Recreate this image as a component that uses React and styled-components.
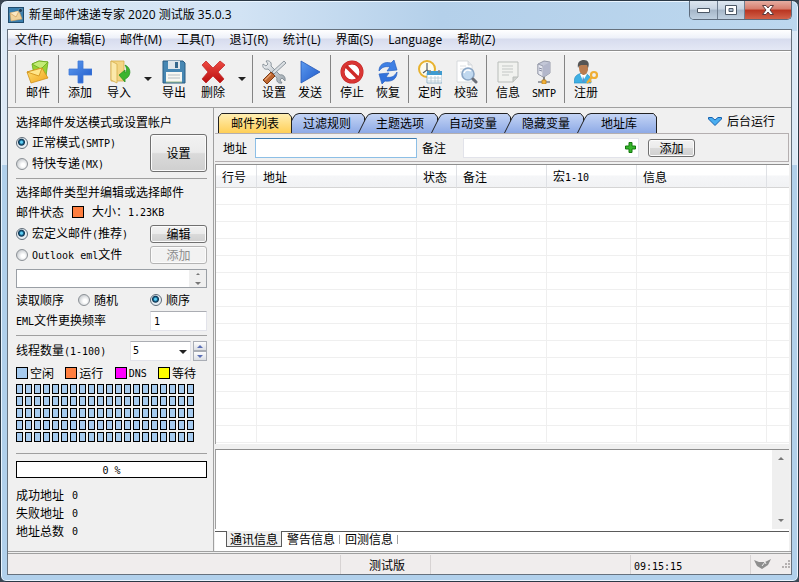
import React, { useState } from "react";
import styled, { createGlobalStyle, css } from "styled-components";

const GlobalStyle = createGlobalStyle`
  * {
    box-sizing: border-box;
  }
  body {
    margin: 0;
    background: #3b4652;
    color: #000;
    font: 12px/16px "Noto Sans CJK SC", sans-serif;
  }
  button, input, select, textarea {
    margin: 0;
    padding: 0;
    border-radius: 0;
    font: inherit;
    color: inherit;
  }
`;

const Window = styled.div`
  display: flex;
  flex-direction: column;
  min-height: 100vh;
  padding: 0 6px 6px;
  border: 1px solid #2b3845;
  border-radius: 7px 7px 6px 6px;
  box-shadow: inset 0 0 0 1px #eaf5ff;
  background: linear-gradient(#dce9f6, #dce9f6) 0 30px / 7px 134px no-repeat,
    linear-gradient(#dce9f6, #dce9f6) 100% 30px / 7px 134px no-repeat,
    linear-gradient(90deg, #d9e8f5 0, #d2e3f4 30%, #b4d0ea 55%, #bcd7ee 100%) 0 0 / 100% 30px no-repeat,
    #b1d0eb;
`;
const TitleBar = styled.header`
  display: flex;
  align-items: flex-start;
  height: 28px;
`;
const AppTitle = styled.h1`
  display: flex;
  flex: 1;
  align-items: center;
  gap: 5px;
  height: 28px;
  margin: 0;
  padding-left: 1px;
  font: 400 12px/16px "Open Sans", "Noto Sans CJK SC", sans-serif;
`;
const WindowButtons = styled.div`
  display: flex;
  border: 1px solid #5d6b7c;
  border-top: 0;
  border-radius: 0 0 5px 5px;
  overflow: hidden;
`;
const WindowButton = styled.button`
  display: flex;
  align-items: center;
  justify-content: center;
  width: ${({ $close }) => ($close ? "47px" : "27px")};
  height: 18px;
  border: 0;
  border-left: ${({ $first }) => ($first ? "0" : "1px solid #6f7f91")};
  background: ${({ $close }) =>
    $close
      ? "linear-gradient(#e5ada2 0, #d67c6c 45%, #b93420 50%, #d2624a 100%)"
      : "linear-gradient(#dde6ef 0, #c6d3e1 45%, #a5b6c8 50%, #bfd0e0 100%)"};
`;
const Client = styled.div`
  display: flex;
  flex: 1;
  flex-direction: column;
  border: 1px solid #66717d;
  background: #f0f0f0;
`;
const MenuBar = styled.nav`
  display: flex;
  align-items: center;
  height: 20px;
  padding-left: 7px;
  gap: 15px;
  background: linear-gradient(#fff 0, #eef1f9 40%, #d7dcee 45%, #e4e8f5 100%);
  font-family: "Open Sans", "Noto Sans CJK SC", sans-serif;
  a {
    color: #000;
    text-decoration: none;
    white-space: nowrap;
  }
`;
const ToolBar = styled.div`
  display: flex;
  height: 58px;
  padding: 4px 0 0 7px;
  border-top: 1px solid #8e8e8e;
  border-bottom: 1px solid #a0a0a0;
  box-shadow: inset 0 1px #fff;
`;
const Grip = styled.div`
  width: 5px;
  height: 48px;
  border-left: 1px solid #a0a0a0;
`;
const Separator = styled.div`
  width: 6px;
  height: 48px;
  padding-left: 2px;
  &::before {
    content: "";
    display: block;
    width: 1px;
    height: 48px;
    background: #848484;
  }
`;
const ToolButton = styled.button`
  display: flex;
  flex-direction: column;
  align-items: center;
  width: 36px;
  height: 48px;
  padding-top: 5px;
  border: 0;
  background: none;
  line-height: 16px;
  svg {
    flex: none;
  }
`;
const Split = styled.div`
  display: flex;
  padding-left: 3px;
`;
const Caret = styled.button`
  display: flex;
  align-items: center;
  justify-content: flex-end;
  width: 19px;
  height: 48px;
  padding-right: 4px;
  border: 0;
  background: none;
`;
const Mono = styled.span`
  font-family: "DejaVu Sans Mono", monospace;
  font-size: 10px;
`;

const Main = styled.div`
  display: flex;
  flex: 1;
  border-bottom: 1px solid #a0a0a0;
`;
const SidePanel = styled.aside`
  flex: none;
  width: 206px;
  padding: 4px 6px 0 8px;
  border-right: 1px solid #a0a0a0;
`;
const Section = styled.section`
  padding-bottom: ${({ $pad }) => $pad || "4px"};
  margin-bottom: ${({ $gap }) => $gap || "4px"};
  border-bottom: ${({ $last }) => ($last ? "0" : "1px solid #a0a0a0")};
`;
const Line = styled.div`
  display: flex;
  align-items: center;
  justify-content: ${({ $between }) => ($between ? "space-between" : "flex-start")};
  gap: ${({ $gap }) => $gap || "8px"};
  height: ${({ $h }) => $h || "18px"};
  white-space: nowrap;
`;
const Pair = styled.div`
  display: grid;
  grid-template-columns: 1fr 57px;
  align-items: center;
`;
const Option = styled.label`
  display: flex;
  align-items: center;
  gap: 4px;
  height: 21px;
  white-space: nowrap;
`;
const Radio = styled.input.attrs({ type: "radio" })`
  appearance: none;
  flex: none;
  width: 12px;
  height: 12px;
  border: 1px solid #8c9196;
  border-radius: 50%;
  background: radial-gradient(circle at 60% 60%, #fff 20%, #c4c8cc 80%);
  &:checked {
    border-color: #5f6c78;
    background: radial-gradient(circle at 45% 42%, #5fd0f5 0 1px, #17658f 2px, #0d3450 3px, #e6edf3 4px);
  }
`;
const PushButton = styled.button`
  width: ${({ $w }) => $w || "100%"};
  height: ${({ $h }) => $h || "18px"};
  border: 1px solid #707070;
  border-radius: 3px;
  box-shadow: inset 0 0 0 1px #fbfbfb;
  background: linear-gradient(#f2f2f2 0, #ebebeb 48%, #dadada 52%, #cfcfcf 100%);
  line-height: 14px;
  &:disabled {
    border-color: #b4b4b4;
    background: #f2f2f2;
    color: #8c8c8c;
  }
`;
const Swatch = styled.span`
  flex: none;
  width: 12px;
  height: 12px;
  border: 1px solid #000;
  background: ${({ $color }) => $color};
`;
const FileList = styled.div`
  display: flex;
  height: 19px;
  margin: 4px 0 1px;
  border: 1px solid #9a9fa5;
  background: #fff;
  textarea {
    flex: 1;
    min-width: 0;
    height: 17px;
    border: 0;
    outline: 0;
    resize: none;
    background: none;
    overflow: hidden;
  }
`;
const ScrollBar = styled.div`
  display: flex;
  flex: none;
  flex-direction: column;
  justify-content: space-between;
  width: 17px;
  background: #efefef;
  button {
    display: flex;
    align-items: center;
    justify-content: center;
    height: ${({ $small }) => ($small ? "8px" : "17px")};
    border: 0;
    background: none;
  }
`;
const TextInput = styled.input`
  width: ${({ $w }) => $w || "100%"};
  height: 20px;
  padding: 0 3px;
  border: 1px solid #e2e3ea;
  border-top-color: #abadb3;
  outline: 0;
  background: #fff;
  font: 10px/16px "DejaVu Sans Mono", "Noto Sans CJK SC", monospace;
  ${({ $focused }) =>
    $focused &&
    css`
      border-color: #8dbfe6;
      border-top-color: #3d7bad;
    `}
`;
const ThreadBox = styled.div`
  display: flex;
  gap: 2px;
`;
const SelectBox = styled.div`
  position: relative;
  select {
    appearance: none;
    width: 61px;
    height: 20px;
    padding-left: 2px;
    border: 1px solid #e2e3ea;
    border-top-color: #abadb3;
    outline: 0;
    background: #fff;
    font: 10px/16px "DejaVu Sans Mono", monospace;
  }
  svg {
    position: absolute;
    right: 4px;
    top: 9px;
    pointer-events: none;
  }
`;
const Spinner = styled.div`
  display: grid;
  grid-template-rows: 10px 10px;
  button {
    display: flex;
    align-items: center;
    justify-content: center;
    width: 14px;
    border: 1px solid #a9adb5;
    background: linear-gradient(#fdfdfd, #dcdfe4);
  }
`;
const Legend = styled.div`
  display: flex;
  align-items: center;
  justify-content: space-between;
  height: 22px;
  padding-right: 11px;
`;
const LegendItem = styled.div`
  display: flex;
  align-items: center;
  gap: 2px;
`;
const Threads = styled.div`
  display: grid;
  grid-template-columns: repeat(20, 7px);
  grid-auto-rows: 10px;
  gap: 2px;
  span {
    border: 1px solid #000;
    background: #a6cbf0;
  }
`;
const Progress = styled.div`
  height: 17px;
  margin-bottom: 8px;
  border: 1px solid #000;
  background: #fff;
  line-height: 14px;
  text-align: center;
`;

const Content = styled.main`
  display: flex;
  flex: 1;
  flex-direction: column;
  min-width: 0;
  padding: 5px 2px 0 1px;
`;
const TabRow = styled.div`
  display: flex;
  align-items: flex-start;
  justify-content: space-between;
  padding-left: 3px;
`;
const Tabs = styled.div`
  display: flex;
`;
const Tab = styled.button`
  position: relative;
  isolation: isolate;
  z-index: ${({ $active }) => ($active ? 1 : 0)};
  width: ${({ $active }) => ($active ? "74px" : "80px")};
  height: 20px;
  padding-left: ${({ $active }) => ($active ? "0" : "4px")};
  margin-right: -7px;
  border: 0;
  background: none;
  line-height: 20px;
  svg {
    position: absolute;
    inset: 0;
    z-index: -1;
  }
`;
const BackgroundRun = styled.button`
  display: flex;
  align-items: center;
  gap: 5px;
  height: 16px;
  padding-right: 14px;
  border: 0;
  background: none;
`;
const AddressForm = styled.form`
  display: flex;
  align-items: center;
  height: 29px;
  padding-left: 8px;
  border: 1px solid #b4afb0;
  border-left: 0;
  label {
    width: 32px;
  }
  label + input {
    margin-right: 5px;
  }
`;
const RemarkBox = styled.div`
  display: flex;
  align-items: center;
  width: 176px;
  height: 20px;
  margin: 0 9px;
  padding-right: 2px;
  border: 1px solid #e2e3ea;
  background: #fff;
  input {
    flex: 1;
    min-width: 0;
    border: 0;
    outline: 0;
    background: none;
  }
  button {
    display: flex;
    border: 0;
    background: none;
  }
`;
const TablePane = styled.div`
  margin-top: 2px;
  padding-bottom: 1px;
  border-top: 1px solid #8e8e8e;
  border-left: 1px solid #a0a0a0;
  background: #fff;
`;
const AddressTable = styled.table`
  width: 100%;
  table-layout: fixed;
  border-collapse: separate;
  border-spacing: 0;
  th {
    height: 23px;
    padding: 2px 0 0 6px;
    border-right: 1px solid #dfe1e5;
    border-bottom: 1px solid #d5d5d5;
    background: linear-gradient(#fff 0, #fff 45%, #f5f6f8 50%, #f1f2f4 100%);
    font-weight: 400;
    line-height: 16px;
    text-align: left;
  }
  td {
    height: 17px;
    padding: 0;
    border-right: 1px solid #efefef;
    border-bottom: 1px solid #efefef;
  }
  th:last-child,
  td:last-child {
    border-right: 0;
  }
`;
const LogPane = styled.div`
  display: flex;
  flex: 1;
  min-height: 70px;
  margin-top: 5px;
  border-top: 1px solid #8e8e8e;
  border-left: 1px solid #a0a0a0;
  background: #fff;
  textarea {
    flex: 1;
    min-width: 0;
    border: 0;
    outline: 0;
    resize: none;
    background: #fff;
  }
`;
const LogTabs = styled.div`
  display: flex;
  height: 22px;
  padding: 2px 0 0 11px;
  background: linear-gradient(#fff 2px, #5a5a5a 2px, #5a5a5a 3px, #fff 3px);
`;
const LogTab = styled.button`
  width: 58px;
  height: 16px;
  border: 0;
  background: none;
  line-height: 16px;
  ${({ $active }) =>
    $active
      ? css`
          width: 56px;
          border: 1px solid #5a5a5a;
          border-top: 0;
          background: #f0f0f0;
        `
      : css`
          background: linear-gradient(#a0a0a0, #a0a0a0) 100% 4px / 1px 9px no-repeat;
        `}
`;
const StatusBar = styled.footer`
  display: flex;
  height: 21px;
  margin-top: 1px;
  padding-top: 1px;
  border-top: 1px solid #a0a0a0;
  background: #f0eded;
`;
const StatusCell = styled.div`
  flex: ${({ $w }) => ($w ? "none" : "1")};
  width: ${({ $w }) => $w};
  padding-left: 3px;
  border-right: 1px solid #d7d3d3;
  line-height: 19px;
  text-align: ${({ $center }) => ($center ? "center" : "left")};
`;
const StatusEnd = styled.div`
  display: flex;
  align-items: center;
  justify-content: space-between;
  width: 40px;
  padding-left: 3px;
`;

const Icon = ({ children }) => (
  <svg width="24" height="24" viewBox="0 0 24 24" aria-hidden="true">
    {children}
  </svg>
);

const Arrow = ({ up, w = 8, color = "#222" }) => (
  <svg width={w} height={w / 2} viewBox="0 0 8 4" aria-hidden="true">
    <path d={up ? "M0 4L4 0L8 4Z" : "M0 0H8L4 4Z"} fill={color} />
  </svg>
);

const HiddenDefs = styled.svg`
  display: block;
  position: absolute;
  width: 0;
  height: 0;
`;

const Gradients = () => (
  <HiddenDefs aria-hidden="true">
    <defs>
      <linearGradient id="blue" x1="0" y1="0" x2="1" y2="1">
        <stop offset="0" stopColor="#5c9bf0" />
        <stop offset="1" stopColor="#1f58c8" />
      </linearGradient>
      <linearGradient id="red" x1="0" y1="0" x2="0" y2="1">
        <stop offset="0" stopColor="#ee4a42" />
        <stop offset="1" stopColor="#b80f0f" />
      </linearGradient>
      <linearGradient id="gold" x1="0" y1="0" x2="1" y2="1">
        <stop offset="0" stopColor="#ffe477" />
        <stop offset="1" stopColor="#f0a31a" />
      </linearGradient>
      <linearGradient id="steel" x1="0" y1="0" x2="1" y2="1">
        <stop offset="0" stopColor="#f4f6f8" />
        <stop offset="1" stopColor="#9aa4ac" />
      </linearGradient>
      <linearGradient id="tabBlue" x1="0" y1="0" x2="0" y2="1">
        <stop offset="0" stopColor="#c5d5f5" />
        <stop offset="1" stopColor="#8eaae6" />
      </linearGradient>
      <linearGradient id="tabGold" x1="0" y1="0" x2="0" y2="1">
        <stop offset="0" stopColor="#ffefb5" />
        <stop offset="1" stopColor="#ffcf57" />
      </linearGradient>
    </defs>
  </HiddenDefs>
);

const MailIcon = () => (
  <Icon>
    <path d="M6 4L13 1L22 2L20 16L8 15Z" fill="#97d235" stroke="#6aa81c" strokeWidth=".8" />
    <path d="M6 4L15 9L22 2L13 1Z" fill="#c3ec76" stroke="#6aa81c" strokeWidth=".8" />
    <path d="M1 12L16 8L22 18L5 23Z" fill="url(#gold)" stroke="#cf8f17" strokeWidth=".8" />
    <path d="M1 12L13 16L16 8Z" fill="#ffe68a" stroke="#cf8f17" strokeWidth=".8" />
  </Icon>
);
const PlusIcon = () => (
  <Icon>
    <path d="M10 1H15V9H24V15H15V23H10V15H1V9H10Z" fill="url(#blue)" stroke="#3f78d8" strokeWidth=".8" />
  </Icon>
);
const ImportIcon = () => (
  <Icon>
    <path d="M4 1H17V21H4Z" fill="#f3d583" stroke="#d6ac4a" strokeWidth=".8" />
    <path d="M4 1L10 4V23L4 20Z" fill="#fbe9aa" stroke="#d6ac4a" strokeWidth=".8" />
    <path d="M18 5C25 8 24 17 18 19L18 22L12 15L18 10V13C20 12 20 8 18 5Z" fill="#3cb52f" stroke="#2b9322" strokeWidth=".8" />
  </Icon>
);
const ExportIcon = () => (
  <Icon>
    <path d="M1 1H21L23 3V23H1Z" fill="#4787b3" stroke="#2b5d82" />
    <path d="M6 1H18V9H6Z" fill="#dfe7ec" />
    <path d="M13 2H16V8H13Z" fill="#35688c" />
    <path d="M4 12H20V22H4Z" fill="#f7f7f2" />
    <path d="M6 15H18M6 18H18" stroke="#b5bdc2" />
    <path d="M4 22H20" stroke="#9dbb8a" />
  </Icon>
);
const DeleteIcon = () => (
  <Icon>
    <path d="M5 1L12 8L19 1L24 5L17 12L23 19L19 23L12 16L5 23L1 19L7 12L1 5Z" fill="url(#red)" stroke="#c22b2b" strokeWidth=".8" />
  </Icon>
);
const ToolsIcon = () => (
  <Icon>
    <path d="M1 4L4 6L6 4L4 1C8 0 10 3 9 6L18 15C21 14 24 17 23 21L20 18L18 20L20 23C16 24 14 21 15 18L6 9C3 10 0 8 1 4Z" fill="url(#steel)" stroke="#77838b" strokeWidth=".8" />
    <path d="M22 1L24 3L12 14L10 12Z" fill="#d9dee2" stroke="#77838b" strokeWidth=".8" />
    <path d="M9 12L13 16L5 24L1 20Z" fill="#bd6631" stroke="#7e3c15" />
    <path d="M9 14L3 20" stroke="#e6a271" strokeWidth="1.2" />
  </Icon>
);
const SendIcon = () => (
  <Icon>
    <path d="M3 1L22 12L3 23Z" fill="url(#blue)" stroke="#2457b5" strokeWidth=".8" />
  </Icon>
);
const StopIcon = () => (
  <Icon>
    <circle cx="12" cy="12" r="9.5" fill="#fff" stroke="#c01f1f" strokeWidth="4" />
    <circle cx="12" cy="12" r="9.5" fill="none" stroke="#d93634" strokeWidth="3" />
    <path d="M6 6L18 18" stroke="#cf2a28" strokeWidth="3.4" />
  </Icon>
);
const ResumeIcon = () => (
  <Icon>
    <path d="M3 11C3 5 8 1 15 3L18 0L21 10L11 11L14 7C9 6 6 7 3 11Z" fill="#3f80e4" stroke="#2a62c2" strokeWidth=".7" />
    <path d="M21 12C21 19 16 22 9 21L6 24L3 14L13 13L10 17C15 18 18 17 21 12Z" fill="#3272dc" stroke="#2a62c2" strokeWidth=".7" />
  </Icon>
);
const ScheduleIcon = () => (
  <Icon>
    <circle cx="9" cy="9" r="8" fill="#fcfbee" stroke="#e8b22e" strokeWidth="2" />
    <path d="M9 3V10L5 13M9 10L12 12" fill="none" stroke="#55606a" strokeWidth="1.2" />
    <path d="M9 13H24V23H9Z" fill="#fff" stroke="#7aa5c0" strokeWidth=".8" />
    <path d="M9 11H24V15H9Z" fill="#3f9bd0" />
    <path d="M12 10V13M21 10V13" stroke="#7c858b" strokeWidth="1.5" />
    <path d="M10 18H23M10 21H23M13 16V23M17 16V23M20 16V23" stroke="#b4c7d2" strokeWidth=".8" />
  </Icon>
);
const VerifyIcon = () => (
  <Icon>
    <path d="M3 1H14L18 5V22H3Z" fill="#fff" stroke="#cfd3d7" strokeWidth=".8" />
    <path d="M14 1V5H18" fill="#e5e8ea" stroke="#cfd3d7" strokeWidth=".8" />
    <path d="M6 6H12M6 9H10M6 12H8" stroke="#dde0e3" />
    <circle cx="14" cy="14" r="6" fill="#c0d8ef" stroke="#8ca7c6" strokeWidth="1.6" />
    <path d="M10 13C11 10 14 9 17 11" fill="none" stroke="#fff" strokeWidth="1.5" />
    <path d="M19 19L22 22" stroke="#6b6f78" strokeWidth="3" strokeLinecap="round" />
  </Icon>
);
const InfoIcon = () => (
  <Icon>
    <path d="M2 2H22V17L17 22H2Z" fill="#f1f2ef" stroke="#b9bdba" />
    <path d="M22 17H17V22" fill="#cfd2cf" stroke="#b9bdba" />
    <path d="M6 6H17M6 9H17M6 12H17M6 15H13" stroke="#c3c7c5" />
  </Icon>
);
const SmtpIcon = () => (
  <Icon>
    <path d="M6 4L12 1L18 2V13L12 17L6 14Z" fill="#c3c7d7" stroke="#84899b" strokeWidth=".8" />
    <path d="M6 4L11 6V17L6 14Z" fill="#e6e8f1" stroke="#84899b" strokeWidth=".7" />
    <path d="M11 6L18 2V13L11 17Z" fill="#b3b7cb" />
    <path d="M7 8L10 9M7 10L10 11" stroke="#868ba2" />
    <path d="M12 17V20" stroke="#888" strokeWidth="2" />
    <path d="M6 22H18" stroke="#9a9da4" strokeWidth="2" />
    <path d="M10 20H14V24H10Z" fill="#f3b23a" stroke="#b77c1b" strokeWidth=".7" />
  </Icon>
);
const RegisterIcon = () => (
  <Icon>
    <path d="M0 23C0 16 3 14 9 13C15 14 17 17 17 23Z" fill="#3fb0e4" stroke="#2c90c4" strokeWidth=".7" />
    <path d="M6 14L9 21L13 14Z" fill="#fff" />
    <path d="M9 16L8 22H11Z" fill="#5b95cc" />
    <path d="M5 5H14V10C13 14 11 15 9 15C7 14 5 12 5 8Z" fill="#b97c50" />
    <path d="M4 8C3 2 6 0 10 0C14 0 16 3 14 8L13 5H7L5 6Z" fill="#555" />
    <circle cx="20" cy="15" r="3" fill="none" stroke="#efae34" strokeWidth="2.2" />
    <path d="M18 17L13 23M15 20L17 22" stroke="#efae34" strokeWidth="2.2" />
  </Icon>
);
const AppLogo = () => (
  <svg width="16" height="16" viewBox="0 0 16 16" aria-hidden="true">
    <rect x=".5" y=".5" width="15" height="15" fill="#3a7fae" stroke="#1f4c6d" />
    <path d="M2 6L11 4L14 12L3 14Z" fill="#f1d39c" stroke="#d9a65a" strokeWidth=".6" />
    <path d="M2 6L8 10L11 4" fill="#fbe8c3" stroke="#c9954b" strokeWidth=".6" />
    <circle cx="12.5" cy="3.5" r="2" fill="#1d3e57" stroke="#7fa9c4" strokeWidth=".6" />
  </svg>
);

const MENUS = ["文件(F)", "编辑(E)", "邮件(M)", "工具(T)", "退订(R)", "统计(L)", "界面(S)", "Language", "帮助(Z)"];
const TABS = ["邮件列表", "过滤规则", "主题选项", "自动变量", "隐藏变量", "地址库"];
const LOG_TABS = ["通讯信息", "警告信息", "回测信息"];
const COLUMNS = [
  { title: "行号", width: 41 },
  { title: "地址", width: 160 },
  { title: "状态", width: 40 },
  { title: "备注", width: 90 },
  { title: <>宏<Mono>1-10</Mono></>, width: 90 },
  { title: "信息", width: 130 },
  { title: "" },
];
const STATES = [
  { name: "空闲", color: "#a6cbf0" },
  { name: "运行", color: "#ff7f40" },
  { name: <Mono>DNS</Mono>, color: "#ff00ff" },
  { name: "等待", color: "#ffff00" },
];
const COUNTS = ["成功地址", "失败地址", "地址总数"];

const Tool = ({ icon, children }) => (
  <ToolButton type="button">
    {icon}
    <span>{children}</span>
  </ToolButton>
);

function Tools() {
  return (
    <ToolBar>
      <Grip />
      <Tool icon={<MailIcon />}>邮件</Tool>
      <Separator />
      <Tool icon={<PlusIcon />}>添加</Tool>
      <Split>
        <Tool icon={<ImportIcon />}>导入</Tool>
        <Caret type="button" aria-label="导入"><Arrow /></Caret>
      </Split>
      <Tool icon={<ExportIcon />}>导出</Tool>
      <Split>
        <Tool icon={<DeleteIcon />}>删除</Tool>
        <Caret type="button" aria-label="删除"><Arrow /></Caret>
      </Split>
      <Separator />
      <Tool icon={<ToolsIcon />}>设置</Tool>
      <Tool icon={<SendIcon />}>发送</Tool>
      <Separator />
      <Tool icon={<StopIcon />}>停止</Tool>
      <Tool icon={<ResumeIcon />}>恢复</Tool>
      <Separator />
      <Tool icon={<ScheduleIcon />}>定时</Tool>
      <Tool icon={<VerifyIcon />}>校验</Tool>
      <Separator />
      <Tool icon={<InfoIcon />}>信息</Tool>
      <Tool icon={<SmtpIcon />}><Mono>SMTP</Mono></Tool>
      <Separator />
      <Tool icon={<RegisterIcon />}>注册</Tool>
    </ToolBar>
  );
}

function Sidebar() {
  return (
    <SidePanel>
      <Section>
        <Line $h="20px">选择邮件发送模式或设置帐户</Line>
        <Pair>
          <div>
            <Option><Radio name="mode" defaultChecked /><span>正常模式<Mono>(SMTP)</Mono></span></Option>
            <Option><Radio name="mode" /><span>特快专递<Mono>(MX)</Mono></span></Option>
          </div>
          <PushButton type="button" $h="38px">设置</PushButton>
        </Pair>
      </Section>
      <Section>
        <Line>选择邮件类型并编辑或选择邮件</Line>
        <Line $h="22px">
          <span>邮件状态</span>
          <Swatch $color="#ff7f40" />
          <span>大小：<Mono>1.23KB</Mono></span>
        </Line>
        <Pair>
          <Option><Radio name="kind" defaultChecked /><span>宏定义邮件<Mono>(</Mono>推荐<Mono>)</Mono></span></Option>
          <PushButton type="button">编辑</PushButton>
          <Option><Radio name="kind" /><span><Mono>Outlook eml</Mono>文件</span></Option>
          <PushButton type="button" disabled>添加</PushButton>
        </Pair>
        <FileList>
          <textarea aria-label="Outlook eml文件" readOnly />
          <ScrollBar $small>
            <button type="button" aria-label="up"><Arrow up w={4} color="#777" /></button>
            <button type="button" aria-label="down"><Arrow w={6} color="#777" /></button>
          </ScrollBar>
        </FileList>
        <Pair>
          <Line $h="22px" $gap="14px">
            <span>读取顺序</span>
            <Option><Radio name="order" />随机</Option>
          </Line>
          <Option><Radio name="order" defaultChecked />顺序</Option>
          <label htmlFor="rate"><Mono>EML</Mono>文件更换频率</label>
          <TextInput id="rate" defaultValue="1" />
        </Pair>
      </Section>
      <Section $pad="11px" $gap="7px">
        <Line $h="22px" $between>
          <label htmlFor="threads">线程数量<Mono>(1-100)</Mono></label>
          <ThreadBox>
            <SelectBox>
              <select id="threads" defaultValue="5">
                <option>5</option>
                <option>10</option>
              </select>
              <Arrow />
            </SelectBox>
            <Spinner>
              <button type="button" aria-label="+"><Arrow up w={6} color="#5b6fb5" /></button>
              <button type="button" aria-label="-"><Arrow w={6} color="#5b6fb5" /></button>
            </Spinner>
          </ThreadBox>
        </Line>
        <Legend>
          {STATES.map((s) => (
            <LegendItem key={s.color}>
              <Swatch $color={s.color} />
              <span>{s.name}</span>
            </LegendItem>
          ))}
        </Legend>
        <Threads>
          {Array.from({ length: 100 }, (_, i) => <span key={i} />)}
        </Threads>
      </Section>
      <Section $last>
        <Progress role="progressbar" aria-valuenow={0}><Mono>0 %</Mono></Progress>
        {COUNTS.map((name) => (
          <Line key={name}>
            <span>{name}</span>
            <span><Mono>0</Mono></span>
          </Line>
        ))}
      </Section>
    </SidePanel>
  );
}

function TabShape({ active }) {
  if (active) {
    return (
      <svg width="74" height="20" viewBox="0 0 74 20" aria-hidden="true">
        <path d="M.5 20V4L3.5 .5H70.5L73.5 4V20" fill="url(#tabGold)" stroke="#222" />
      </svg>
    );
  }
  return (
    <svg width="80" height="20" viewBox="0 0 80 20" aria-hidden="true">
      <path d="M.5 20L8 5Q10 .5 14 .5H76.5L79.5 4V20" fill="url(#tabBlue)" stroke="#222" />
    </svg>
  );
}

function Workspace() {
  const [tab, setTab] = useState(0);
  const [log, setLog] = useState(0);
  return (
    <Content>
      <TabRow>
        <Tabs role="tablist">
          {TABS.map((name, i) => (
            <Tab key={name} type="button" role="tab" $active={i === tab} aria-selected={i === tab} onClick={() => setTab(i)}>
              <TabShape active={i === tab} />
              {name}
            </Tab>
          ))}
        </Tabs>
        <BackgroundRun type="button">
          <svg width="14" height="9" viewBox="0 0 14 9" aria-hidden="true">
            <path d="M.5 .5H4L7 3L10 .5H13.5V2L7 8.5L.5 2Z" fill="#4aaef0" stroke="#1762b0" />
          </svg>
          后台运行
        </BackgroundRun>
      </TabRow>
      <AddressForm onSubmit={(e) => e.preventDefault()}>
        <label htmlFor="address">地址</label>
        <TextInput id="address" $w="162px" $focused />
        <label htmlFor="remark">备注</label>
        <RemarkBox>
          <input id="remark" />
          <button type="button" aria-label="添加备注">
            <svg width="11" height="11" viewBox="0 0 11 11" aria-hidden="true">
              <path d="M4 .5H7V4H10.5V7H7V10.5H4V7H.5V4H4Z" fill="#35b52a" stroke="#14780f" />
            </svg>
          </button>
        </RemarkBox>
        <PushButton type="submit" $w="47px">添加</PushButton>
      </AddressForm>
      <TablePane>
        <AddressTable>
          <colgroup>
            {COLUMNS.map((c, i) => <col key={i} width={c.width} />)}
          </colgroup>
          <thead>
            <tr>{COLUMNS.map((c, i) => <th key={i}>{c.title}</th>)}</tr>
          </thead>
          <tbody>
            {Array.from({ length: 15 }, (_, r) => (
              <tr key={r}>{COLUMNS.map((c, i) => <td key={i} />)}</tr>
            ))}
          </tbody>
        </AddressTable>
      </TablePane>
      <LogPane>
        <textarea aria-label="通讯信息" readOnly />
        <ScrollBar>
          <button type="button" aria-label="up"><Arrow up w={6} color="#777" /></button>
          <button type="button" aria-label="down"><Arrow w={6} color="#777" /></button>
        </ScrollBar>
      </LogPane>
      <LogTabs role="tablist">
        {LOG_TABS.map((name, i) => (
          <LogTab key={name} type="button" role="tab" $active={i === log} aria-selected={i === log} onClick={() => setLog(i)}>
            {name}
          </LogTab>
        ))}
      </LogTabs>
    </Content>
  );
}

export default function App() {
  return (
    <>
      <GlobalStyle />
      <Gradients />
      <Window>
        <TitleBar>
          <AppTitle><AppLogo />新星邮件速递专家 2020 测试版 35.0.3</AppTitle>
          <WindowButtons>
            <WindowButton $first type="button" aria-label="minimize">
              <svg width="13" height="5"><path d="M.5 .5H12.5V4.5H.5Z" fill="#fff" stroke="#4c5866" /></svg>
            </WindowButton>
            <WindowButton type="button" aria-label="maximize">
              <svg width="12" height="10"><path d="M.5 .5H11.5V9.5H.5ZM4 3.5V6.5H8V3.5Z" fill="#fff" fillRule="evenodd" stroke="#4c5866" /></svg>
            </WindowButton>
            <WindowButton $close type="button" aria-label="close">
              <svg width="12" height="10"><path d="M.5 .5H4L6 3L8 .5H11.5L8 5L11.5 9.5H8L6 7L4 9.5H.5L4 5Z" fill="#fff" stroke="#5a3a3c" /></svg>
            </WindowButton>
          </WindowButtons>
        </TitleBar>
        <Client>
          <MenuBar>
            {MENUS.map((m) => <a key={m} href="#menu">{m}</a>)}
          </MenuBar>
          <Tools />
          <Main>
            <Sidebar />
            <Workspace />
          </Main>
          <StatusBar>
            <StatusCell />
            <StatusCell $w="90px" $center>测试版</StatusCell>
            <StatusCell $w="200px" />
            <StatusCell $w="120px"><Mono>09:15:15</Mono></StatusCell>
            <StatusEnd>
              <svg width="17" height="11" viewBox="0 0 17 11" aria-hidden="true">
                <path d="M0 1L5 3H11L17 0L14 6L8 10L3 7Z" fill="#8e8e8e" />
                <path d="M8 7L11 3L12 5" fill="none" stroke="#eee" />
              </svg>
              <svg width="9" height="9" viewBox="0 0 9 9" aria-hidden="true">
                <path d="M6 0H8V2H6ZM3 3H5V5H3ZM6 3H8V5H6ZM0 6H2V8H0ZM3 6H5V8H3ZM6 6H8V8H6Z" fill="#b5b1b1" />
              </svg>
            </StatusEnd>
          </StatusBar>
        </Client>
      </Window>
    </>
  );
}
